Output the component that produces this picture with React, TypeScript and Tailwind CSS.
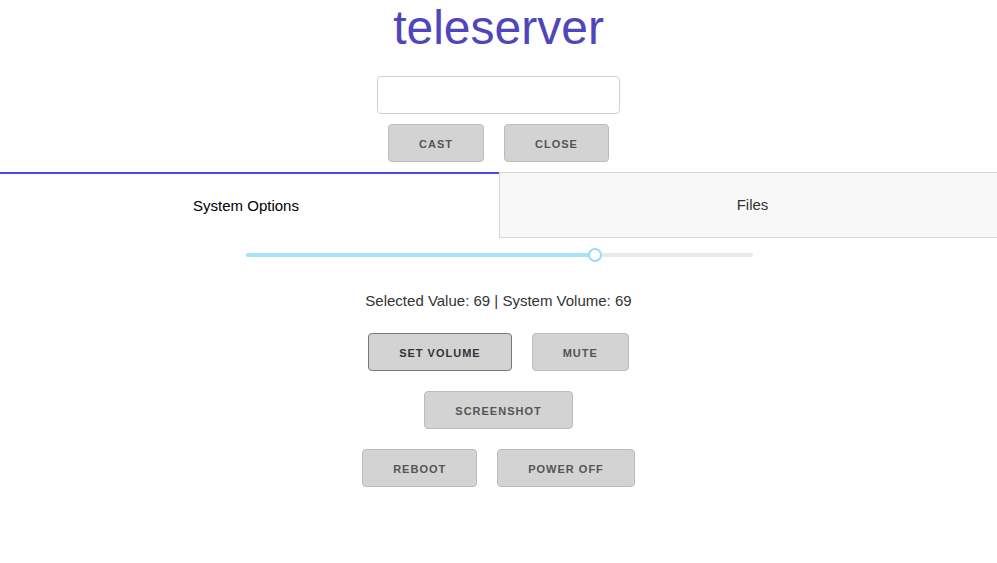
import { useState } from 'react';

const btnBase =
  'h-[38px] px-[30px] rounded-[4px] border bg-[#d3d3d3] text-[11px] font-bold uppercase tracking-[1px] leading-[38px]';
const btn = `${btnBase} border-[#bbbbbb] text-[#555555]`;
const btnFocused = `${btnBase} border-[#777777] text-[#333333]`;

export default function App() {
  const [volume, setVolume] = useState(69);
  const [tab, setTab] = useState<'system' | 'files'>('system');

  return (
    <div className="min-h-[563px] bg-white text-[15px] text-[#222222] font-['Liberation_Sans',Arial,sans-serif]">
      <h1 className="text-center text-[48px] leading-[55px] text-[#4f45bd] mb-[21px]">teleserver</h1>

      <div className="flex flex-col items-center">
        <input
          type="text"
          className="w-[243px] h-[38px] rounded-[4px] border border-[#d1d1d1] px-[10px] outline-none"
        />
        <div className="flex gap-[20px] mt-[10px]">
          <button className={btn}>Cast</button>
          <button className={btn}>Close</button>
        </div>
      </div>

      <div className="flex mt-[10px] h-[66px]">
        <button
          onClick={() => setTab('system')}
          className="w-[499px] border-t-2 border-[#4b47e8] bg-white text-black pt-[1px] pr-[7px]"
        >
          System Options
        </button>
        <button
          onClick={() => setTab('files')}
          className="flex-1 border border-r-0 border-[#d6d6d6] bg-[#f8f8f8] text-[#333333] pl-[8px]"
        >
          Files
        </button>
      </div>

      {tab === 'system' && (
        <div className="flex flex-col items-center">
          <div className="relative w-[507px] h-[14px] mt-[10px] ml-[2px]">
            <div className="absolute left-0 right-0 top-[5px] h-[4px] rounded-full bg-[#e9e9e9]" />
            <div
              className="absolute left-0 top-[5px] h-[4px] rounded-full bg-[#abe2fb]"
              style={{ width: `${volume}%` }}
            />
            <div
              className="absolute top-0 w-[14px] h-[14px] -ml-[8px] rounded-full border-2 border-[#96dbfa] bg-white"
              style={{ left: `${volume}%` }}
            />
            <input
              type="range"
              min={0}
              max={100}
              value={volume}
              onChange={(e) => setVolume(Number(e.target.value))}
              className="absolute inset-0 w-full opacity-0 cursor-pointer"
            />
          </div>

          <p className="mt-[27px] text-[#333333] leading-[24px]">
            Selected Value: {volume} | System Volume: {volume}
          </p>

          <div className="flex gap-[20px] mt-[20px]">
            <button className={btnFocused}>Set Volume</button>
            <button className={btn}>Mute</button>
          </div>
          <div className="flex gap-[20px] mt-[20px]">
            <button className={btn}>Screenshot</button>
          </div>
          <div className="flex gap-[20px] mt-[20px]">
            <button className={btn}>Reboot</button>
            <button className={btn}>Power Off</button>
          </div>
        </div>
      )}
    </div>
  );
}
